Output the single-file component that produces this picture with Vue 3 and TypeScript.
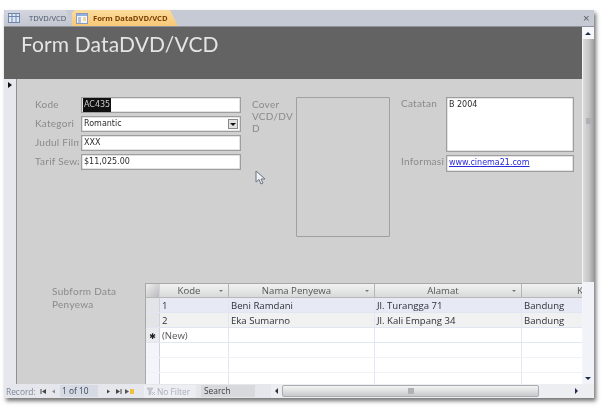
<script setup lang="ts">
interface Row { kode: string; nama: string; alamat: string; kota: string; cls: string; mark?: boolean }
const rows: Row[] = [
  { kode: '1', nama: 'Beni Ramdani', alamat: 'Jl. Turangga 71', kota: 'Bandung', cls: 'sel' },
  { kode: '2', nama: 'Eka Sumarno', alamat: 'Jl. Kali Empang 34', kota: 'Bandung', cls: 'alt' },
  { kode: '(New)', nama: '', alamat: '', kota: '', cls: 'new', mark: true },
  { kode: '', nama: '', alamat: '', kota: '', cls: 'empty' },
  { kode: '', nama: '', alamat: '', kota: '', cls: 'empty' },
  { kode: '', nama: '', alamat: '', kota: '', cls: 'empty last' },
]
</script>

<template>
  <div class="page">
    <div class="window">
      <div class="tabs">
        <div class="tab plain">
          <svg width="12" height="10" viewBox="0 0 12 10"><rect x=".5" y=".5" width="11" height="9" fill="#dfe8f5" stroke="#6f86ad"/><path d="M0 3.5h12M4 0v10M8 0v10" stroke="#6f86ad"/></svg>
          <span>TDVD/VCD</span>
        </div>
        <div class="tab active">
          <svg width="12" height="11" viewBox="0 0 12 11"><rect x=".5" y=".5" width="11" height="10" fill="#f4f6fb" stroke="#8a9ab8"/><rect x="1" y="1" width="10" height="2" fill="#8fb1df"/><path d="M2 5h3M2 7h3M2 9h3" stroke="#7f8fa8"/><path d="M7 5h3M7 7h3" stroke="#f0b84a"/></svg>
          <span>Form DataDVD/VCD</span>
        </div>
        <div class="close">×</div>
      </div>
      <div class="content">
        <div class="main">
          <div class="header"><h1>Form DataDVD/VCD</h1></div>
          <div class="formrow">
            <div class="selector"><i class="arrow"></i></div>
            <div class="detail">
              <div class="top">
                <div class="fields">
                  <label>Kode</label>
                  <div class="input"><span class="hl">AC435</span></div>
                  <label>Kategori</label>
                  <div class="input combo"><span>Romantic</span><b class="drop"><i></i></b></div>
                  <label>Judul Film</label>
                  <div class="input">XXX</div>
                  <label>Tarif Sewa</label>
                  <div class="input">$11,025.00</div>
                </div>
                <label class="cover-label">Cover<br>VCD/DV<br>D</label>
                <div class="cover"></div>
                <div class="notes">
                  <label>Catatan</label>
                  <div class="input area">B 2004</div>
                  <label>Informasi</label>
                  <div class="input link">www.cinema21.com</div>
                </div>
              </div>
              <div class="sub">
                <label class="sub-label">Subform Data Penyewa</label>
                <div class="sheet">
                  <div class="srow head">
                    <div class="rs corner"></div>
                    <div class="c c1">Kode<em></em></div>
                    <div class="c c2">Nama Penyewa<em></em></div>
                    <div class="c c3">Alamat<em></em></div>
                    <div class="c c4">K</div>
                  </div>
                  <div v-for="(r, i) in rows" :key="i" class="srow" :class="r.cls">
                    <div class="rs"><i v-if="r.mark" class="star">✱</i></div>
                    <div class="c c1">{{ r.kode }}</div>
                    <div class="c c2">{{ r.nama }}</div>
                    <div class="c c3">{{ r.alamat }}</div>
                    <div class="c c4">{{ r.kota }}</div>
                  </div>
                </div>
              </div>
            </div>
          </div>
        </div>
        <div class="vscroll">
          <div class="vbtn"><i class="up"></i></div>
          <div class="vthumb"><span></span></div>
          <div class="vtrack"><i class="down"></i></div>
        </div>
      </div>
      <div class="nav">
        <span class="rec">Record:</span>
        <svg class="ico" width="10" height="7" viewBox="0 0 10 7"><path d="M2 1v5" stroke="#444"/><path d="M7 1v5L3 3.5z" fill="#444"/></svg>
        <svg class="ico" width="10" height="7" viewBox="0 0 10 7"><path d="M6 1.5v4L3 3.5z" fill="#8a8f98"/></svg>
        <span class="count">1 of 10</span>
        <svg class="ico" width="10" height="7" viewBox="0 0 10 7"><path d="M4 1.5v4l3-2z" fill="#444"/></svg>
        <svg class="ico" width="10" height="7" viewBox="0 0 10 7"><path d="M3 1v5l4-2.5z" fill="#444"/><path d="M8 1v5" stroke="#444"/></svg>
        <svg class="ico new" width="12" height="7" viewBox="0 0 12 7"><path d="M1 1v5l4-2.5z" fill="#555"/><rect x="6" y="1" width="4" height="5" fill="#f0c040"/></svg>
        <span class="filter">
          <svg width="10" height="9" viewBox="0 0 10 9"><path d="M1 1h6L5 4v3L3 8V4z" fill="#c5cad4" stroke="#a7adb8" stroke-width=".5"/><path d="M6 5l3 3M9 5L6 8" stroke="#b9bec8"/></svg>
          No Filter
        </span>
        <span class="search">Search</span>
        <div class="hscroll">
          <i class="left"></i>
          <div class="hthumb"><span></span></div>
          <i class="right"></i>
        </div>
      </div>
    </div>
    <svg class="cursor" width="11" height="16" viewBox="0 0 11 16"><path d="M1 1v11l3-2.5 2 4.5 2-1-2-4h4z" fill="#eef0f4" stroke="#6a7484"/></svg>
  </div>
</template>

<style>
html, body { margin: 0; background: #fff; }
</style>

<style scoped>
.page {
  position: relative;
  width: 605px;
  height: 411px;
  box-sizing: border-box;
  padding: 10px 0 0 4px;
  background: #fff;
  overflow: hidden;
  filter: blur(0.55px);
  font-family: "Open Sans", sans-serif;
}
.window {
  width: 590px;
  height: 388px;
  display: flex;
  flex-direction: column;
  background: #e4e7ee;
  box-shadow: 2px 3px 4px rgba(70, 70, 70, .75);
}
.tabs {
  height: 17px;
  flex: none;
  display: flex;
  align-items: flex-end;
  background: #c6cad4;
  border-bottom: 1px solid #8f929a;
  box-sizing: border-box;
  position: relative;
}
.tab {
  height: 16px;
  display: flex;
  align-items: center;
  font-size: 7.6px;
  white-space: nowrap;
  box-sizing: border-box;
}
.tab.plain {
  width: 68px;
  padding-left: 4px;
  gap: 9px;
  color: #4b5568;
  background: linear-gradient(#d3d6de, #c2c6d1);
  clip-path: polygon(0 100%, 0 2px, 2px 0, calc(100% - 6px) 0, 100% 100%);
}
.tab.active {
  width: 106px;
  padding-left: 4px;
  gap: 5px;
  background: linear-gradient(#fcdc9c, #f8c878);
  clip-path: polygon(0 100%, 0 3px, 3px 0, calc(100% - 8px) 0, 100% 100%);
  color: #7a4206;
  font-weight: 700;
}
.close {
  position: absolute;
  right: 4px;
  top: 2px;
  font-family: "DejaVu Sans", sans-serif;
  font-size: 9px;
  line-height: 12px;
  color: #555;
}
.content {
  flex: 1;
  min-height: 0;
  display: flex;
}
.main {
  flex: 1;
  min-width: 0;
  display: flex;
  flex-direction: column;
}
.header {
  height: 52px;
  flex: none;
  background: #636363;
  box-sizing: border-box;
  padding: 2px 0 0 17px;
}
h1 {
  margin: 0;
  font-family: "Lato", sans-serif;
  font-weight: 400;
  font-size: 21px;
  line-height: 30px;
  letter-spacing: .12px;
  color: #e4e4e4;
}
.formrow {
  flex: 1;
  display: flex;
}
.selector {
  width: 12px;
  flex: none;
  background: #e6e8ee;
  border-right: 1px solid #8e9096;
  position: relative;
}
.arrow {
  position: absolute;
  left: 4px;
  top: 3px;
  border-left: 4px solid #111;
  border-top: 3.5px solid transparent;
  border-bottom: 3.5px solid transparent;
}
.detail {
  flex: 1;
  min-width: 0;
  background: #d0d0d0;
  display: flex;
  flex-direction: column;
  padding-top: 18px;
}
label {
  font-family: "Lato", sans-serif;
  font-size: 10px;
  letter-spacing: .25px;
  line-height: 12px;
  color: #8a8a8a;
  white-space: nowrap;
  overflow: hidden;
}
.fields label {
  width: 44px;
  padding-bottom: 2px;
}
.top {
  display: flex;
  align-items: flex-start;
  height: 140px;
  padding-left: 18px;
}
.fields {
  width: 206px;
  flex: none;
  display: grid;
  grid-template-columns: 46px 160px;
  grid-auto-rows: 16px;
  row-gap: 3px;
  align-items: center;
}
.input {
  box-sizing: border-box;
  height: 100%;
  background: #fff;
  border: 1px solid #9e9e9e;
  box-shadow: inset 0 0 0 .5px #c8c8c8;
  padding-left: 2px;
  font-family: "DejaVu Sans", sans-serif;
  font-size: 8px;
  line-height: 14px;
  color: #2c2c2c;
  overflow: hidden;
  white-space: nowrap;
}
.hl {
  display: inline-block;
  background: #111;
  color: #ccc;
  margin-left: -1px;
  padding: 0 1px;
}
.combo {
  display: flex;
  justify-content: space-between;
  padding-right: 2px;
}
.drop {
  width: 10px;
  height: 10px;
  margin-top: 2px;
  background: #e2e2e2;
  border: 1px solid #888;
  box-sizing: border-box;
  display: flex;
  align-items: center;
  justify-content: center;
}
.drop i {
  border-top: 3px solid #111;
  border-left: 3px solid transparent;
  border-right: 3px solid transparent;
}
.cover-label {
  width: 44px;
  flex: none;
  margin-left: 11px;
  padding-top: 1px;
}
.cover {
  width: 94px;
  height: 140px;
  flex: none;
  box-sizing: border-box;
  border: 1px solid #a0a0a0;
  border-radius: 1px;
}
.notes {
  margin-left: 11px;
  width: 173px;
  display: grid;
  grid-template-columns: 45px 128px;
  grid-template-rows: 55px 17px;
  row-gap: 3px;
  align-items: start;
}
.link {
  color: #2b2bd8;
  text-decoration: underline;
}
.sub {
  margin-top: 46px;
  display: flex;
  align-items: flex-start;
  padding-left: 35px;
}
.sub-label {
  width: 93px;
  flex: none;
  white-space: normal;
  padding-top: 2px;
  line-height: 13px;
  letter-spacing: .3px;
}
.sheet {
  flex: 1;
  min-width: 0;
  height: 101px;
  overflow: hidden;
  background: #fff;
  border-top: 1px solid #a8a8a8;
  border-left: 1px solid #a8a8a8;
  box-sizing: border-box;
  font-family: "Open Sans", "DejaVu Sans", sans-serif;
  font-size: 9.6px;
  color: #2f3038;
}
.srow {
  display: flex;
  height: 15px;
  box-sizing: border-box;
  border-bottom: 1px solid #e2e6f2;
  line-height: 15px;
}
.srow.head {
  height: 14px;
  line-height: 13px;
  background: linear-gradient(#f2f2f2, #d8d9da);
  border-bottom: 1px solid #b8b8b8;
  color: #555;
}
.srow.last { height: 12px; border-bottom: 0; }
.srow.empty { border-bottom-color: #f0f2f8; }
.srow.sel .c { background: #e7eaf5; }
.srow.alt .c { background: #f1f1f1; }
.srow.new .c1 { color: #555; }
.rs {
  width: 14px;
  flex: none;
  box-sizing: border-box;
  background: #e3e4e7;
  border-right: 1px solid #d0d3dc;
  text-align: center;
  position: relative;
}
.srow.empty .rs { background: #f3f5fb; }
.srow.new .rs { background: #eaebee; }
.corner { background: linear-gradient(135deg, #eee, #bbb); }
.star {
  font-style: normal;
  font-size: 8px;
  font-family: "DejaVu Sans", sans-serif;
  color: #222;
}
.c {
  box-sizing: border-box;
  flex: none;
  padding-left: 2px;
  border-right: 1px solid #e2e6f2;
  white-space: nowrap;
  overflow: hidden;
}
.c1 { width: 69px; }
.c2 { width: 146px; }
.c3 { width: 147px; }
.c4 { flex: 1; border-right: 0; padding-left: 2px; }
.head .c {
  position: relative;
  text-align: center;
  border-right: 1px solid #b5b5b5;
  padding: 0 10px 0 0;
}
.head .c4 {
  text-align: left;
  padding: 0 0 0 55px;
  border-right: 0;
}
.head em {
  position: absolute;
  right: 5px;
  top: 6px;
  border-top: 2px solid #777;
  border-left: 2px solid transparent;
  border-right: 2px solid transparent;
}
.vscroll {
  width: 12px;
  flex: none;
  display: flex;
  flex-direction: column;
  background: #e4e7ee;
  border-left: 1px solid #f4f5f8;
  box-sizing: border-box;
}
.vbtn {
  height: 12px;
  background: #f6f7fa;
  position: relative;
}
.up, .down, .left, .right { position: absolute; display: block; }
.up {
  left: 2px;
  top: 5px;
  border-bottom: 3px solid #1f2d4a;
  border-left: 3.5px solid transparent;
  border-right: 3.5px solid transparent;
}
.vthumb {
  height: 243px;
  background: linear-gradient(90deg, #dcdcdc, #c4c4c4 55%, #9e9e9e);
  display: flex;
  align-items: center;
  justify-content: center;
}
.vthumb span { width: 6px; height: 6px; background: #aeb0b4; margin-top: -80px; }
.vtrack {
  flex: 1;
  position: relative;
  background: #f1f3f8;
}
.down {
  left: 2px;
  bottom: 4px;
  border-top: 3px solid #1f2d4a;
  border-left: 3.5px solid transparent;
  border-right: 3.5px solid transparent;
}
.nav {
  height: 14px;
  flex: none;
  display: flex;
  align-items: center;
  background: #e5e7ec;
  font-family: "Open Sans", sans-serif;
  font-size: 8.4px;
  color: #7d8696;
  white-space: nowrap;
}
.rec { width: 35px; flex: none; padding-left: 2px; box-sizing: border-box; }
.ico { flex: none; }
.ico.new { margin-left: 1px; }
.count {
  width: 38px;
  flex: none;
  box-sizing: border-box;
  margin: 0 5px 0 1px;
  padding-left: 2px;
  background: #d6dae2;
  color: #3a4660;
  line-height: 12px;
}
.filter {
  width: 52px;
  flex: none;
  display: flex;
  align-items: center;
  gap: 1px;
  box-sizing: border-box;
  margin-left: 8px;
  padding-left: 2px;
  background: #eceef2;
  color: #a8adb8;
  line-height: 13px;
}
.search {
  width: 54px;
  flex: none;
  box-sizing: border-box;
  margin-left: 5px;
  padding-left: 3px;
  background: #d8d9dc;
  color: #3c3c44;
  line-height: 12px;
}
.hscroll {
  flex: 1;
  height: 14px;
  margin-left: 16px;
  position: relative;
  background: #eceef2;
}
.left {
  left: 4px;
  top: 4px;
  border-right: 3px solid #333;
  border-top: 3px solid transparent;
  border-bottom: 3px solid transparent;
}
.right {
  right: 16px;
  top: 4px;
  border-left: 3px solid #1f2d4a;
  border-top: 3px solid transparent;
  border-bottom: 3px solid transparent;
}
.hthumb {
  position: absolute;
  left: 11px;
  top: 1px;
  width: 257px;
  height: 12px;
  box-sizing: border-box;
  border: 1px solid #a9abae;
  border-radius: 2px;
  background: linear-gradient(#f4f4f4, #c8c9cb);
  display: flex;
  align-items: center;
  justify-content: center;
}
.hthumb span { width: 6px; height: 6px; background: #b0b2b6; }
.cursor {
  position: absolute;
  left: 255px;
  top: 170px;
}
</style>
